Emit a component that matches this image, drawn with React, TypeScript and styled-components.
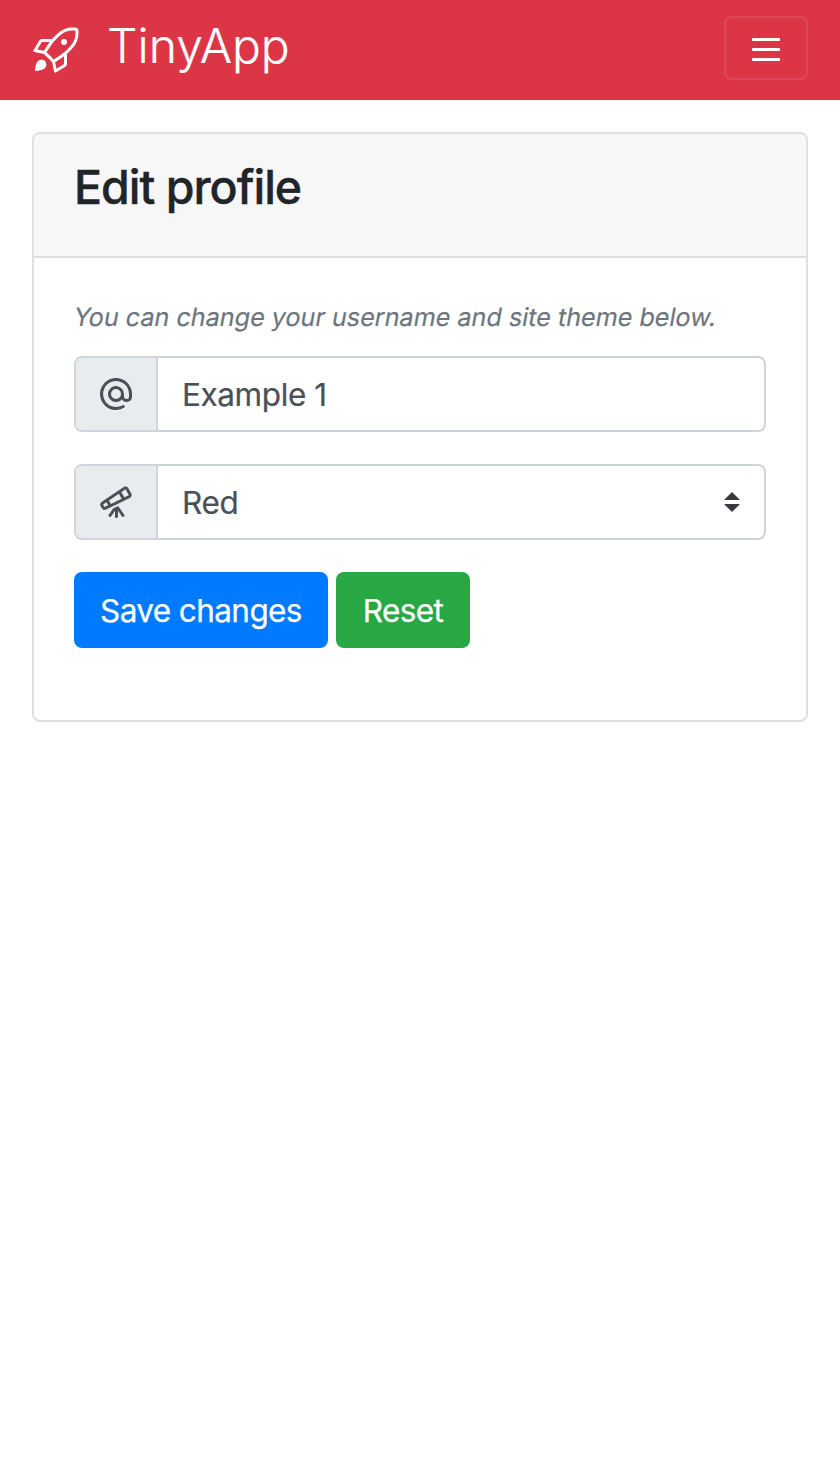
import React from "react";
import styled, { createGlobalStyle } from "styled-components";
import { GoRocket } from "react-icons/go";

const GlobalStyle = createGlobalStyle`
  *, *::before, *::after { box-sizing: border-box; }
  body {
    margin: 0;
    background: #fff;
    color: #212529;
    font-family: Inter, "Liberation Sans", sans-serif;
    font-size: 31.5px;
    line-height: 48px;
  }
`;

const Navbar = styled.nav`
  display: flex;
  align-items: center;
  justify-content: space-between;
  height: 100px;
  padding: 0 32px;
  background: #dc3545;
  color: #fff;
`;

const Brand = styled.a`
  display: flex;
  align-items: center;
  gap: 27px;
  height: 100px;
  color: inherit;
  text-decoration: none;
`;

const BrandName = styled.span`
  padding-bottom: 9px;
  font-size: 48px;
  font-weight: 300;
  line-height: 72px;
  -webkit-text-stroke: 0.2px currentColor;
`;

const Toggler = styled.button`
  display: flex;
  flex-direction: column;
  align-items: center;
  justify-content: center;
  gap: 7px;
  width: 84px;
  height: 64px;
  margin: 0 0 4px;
  padding: 2px 0 0;
  border: 2px solid rgba(255, 255, 255, 0.1);
  border-radius: 8px;
  background: transparent;
`;

const TogglerBar = styled.span`
  width: 28px;
  height: 3px;
  border-radius: 1px;
  background: #fff;
`;

const Card = styled.main`
  height: 590px;
  margin: 32px;
  border: 2px solid #dfdfdf;
  border-radius: 8px;
  background: #fff;
`;

const CardHeader = styled.header`
  height: 124px;
  padding: 24px 40px;
  border-bottom: 2px solid #dfdfdf;
  border-radius: 6px 6px 0 0;
  background: #f7f7f7;
`;

const Title = styled.h1`
  margin: 0;
  font-size: 46.5px;
  font-weight: 500;
  line-height: 58px;
  letter-spacing: -1px;
  -webkit-text-stroke: 0.4px currentColor;
`;

const CardBody = styled.form`
  display: flex;
  flex-direction: column;
  align-items: stretch;
  padding: 40px;
`;

const Hint = styled.p`
  margin: 0 0 20px;
  color: #6c757d;
  font-size: 25.2px;
  line-height: 38px;
  letter-spacing: -0.02px;
  white-space: nowrap;
  transform: skewX(-10deg);
  -webkit-text-stroke: 0.15px currentColor;
`;

const InputGroup = styled.div`
  display: flex;
  height: 76px;
  margin-bottom: 32px;
  border: 2px solid #ced4da;
  border-radius: 8px;
  overflow: hidden;
`;

const Addon = styled.span`
  display: flex;
  align-items: center;
  justify-content: center;
  width: 82px;
  border-right: 2px solid #ced4da;
  background: #e9ecef;
  color: #495057;
`;

const Field = styled.div`
  display: flex;
  flex: 1;
  align-items: center;
  justify-content: space-between;
  padding: 0 24px;
  color: #495057;
`;

const FieldValue = styled.span`
  padding-top: 2px;
  letter-spacing: -0.4px;
  -webkit-text-stroke: 0.2px currentColor;
`;

const Actions = styled.div`
  display: flex;
  gap: 8px;
`;

const Button = styled.button<{ $color: string; $width: number }>`
  width: ${(p) => p.$width}px;
  height: 76px;
  padding: 2px 0 0;
  border: 0;
  border-radius: 8px;
  background: ${(p) => p.$color};
  color: #fff;
  font: inherit;
  letter-spacing: -0.6px;
  -webkit-text-stroke: 0.25px currentColor;
`;

const MentionIcon = () => (
  <svg width="32" height="32" viewBox="0 0 16 16" fill="currentColor">
    <path d="M4.75 2.37a6.501 6.501 0 0 0 6.5 11.26.75.75 0 0 1 .75 1.298A7.999 7.999 0 0 1 .989 4.148 8 8 0 0 1 16 7.75v1.5a2.75 2.75 0 0 1-5.072 1.475 3.999 3.999 0 0 1-6.65-4.19A4 4 0 0 1 12 8v1.25a1.25 1.25 0 0 0 2.5 0V7.867a6.5 6.5 0 0 0-9.75-5.496ZM10.5 8a2.5 2.5 0 1 0-5 0 2.5 2.5 0 0 0 5 0Z" />
  </svg>
);

const TelescopeIcon = () => (
  <svg width="32" height="32" viewBox="0 0 16 16" fill="currentColor">
    <path d="M14.184 1.143v-.001l1.422 2.464a1.75 1.75 0 0 1-.757 2.451L3.104 11.713a1.75 1.75 0 0 1-2.275-.702l-.447-.775a1.75 1.75 0 0 1 .53-2.32L11.682.573a1.748 1.748 0 0 1 2.502.57Zm-4.709 9.32h-.001l2.644 3.863a.75.75 0 1 1-1.238.848l-1.881-2.75v2.826a.75.75 0 0 1-1.5 0v-2.826l-1.881 2.75a.75.75 0 1 1-1.238-.848l2.049-2.992a.746.746 0 0 1 .293-.253l1.809-.87a.749.749 0 0 1 .944.252ZM9.436 3.92h-.001l-4.97 3.39.942 1.63 5.42-2.61Zm3.091-2.108h.001l-1.85 1.26 1.505 2.605 2.016-.97a.247.247 0 0 0 .13-.151.247.247 0 0 0-.022-.199l-1.422-2.464a.253.253 0 0 0-.161-.119.254.254 0 0 0-.197.038ZM1.756 9.157a.25.25 0 0 0-.075.33l.447.775a.25.25 0 0 0 .325.1l1.598-.769-.83-1.436-1.465 1Z" />
  </svg>
);

const SelectArrows = () => (
  <svg width="16" height="20" viewBox="0 0 4 5" fill="#343a40">
    <path d="M2 0L0 2h4zm0 5L0 3h4z" />
  </svg>
);

export default function App() {
  return (
    <>
      <GlobalStyle />
      <Navbar>
        <Brand>
          <GoRocket size={48} />
          <BrandName>TinyApp</BrandName>
        </Brand>
        <Toggler aria-label="Toggle navigation">
          <TogglerBar />
          <TogglerBar />
          <TogglerBar />
        </Toggler>
      </Navbar>
      <Card>
        <CardHeader>
          <Title>Edit profile</Title>
        </CardHeader>
        <CardBody>
          <Hint>You can change your username and site theme below.</Hint>
          <InputGroup>
            <Addon><MentionIcon /></Addon>
            <Field>
              <FieldValue>Example 1</FieldValue>
            </Field>
          </InputGroup>
          <InputGroup>
            <Addon><TelescopeIcon /></Addon>
            <Field>
              <FieldValue>Red</FieldValue>
              <SelectArrows />
            </Field>
          </InputGroup>
          <Actions>
            <Button type="button" $color="#007bff" $width={254}>Save changes</Button>
            <Button type="button" $color="#28a745" $width={134}>Reset</Button>
          </Actions>
        </CardBody>
      </Card>
    </>
  );
}
